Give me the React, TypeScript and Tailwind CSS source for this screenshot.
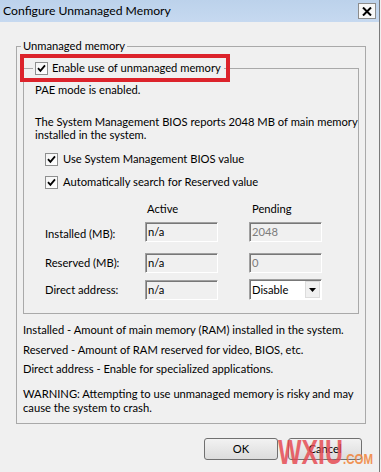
import React from 'react';

const Check = () => (
  <svg width="9" height="9" viewBox="0 0 9 9" aria-hidden>
    <path d="M1 4.2 L3.4 6.8 L8 1.4" fill="none" stroke="#000" strokeWidth="1.8" />
  </svg>
);

const CheckBox: React.FC = () => (
  <span className="inline-flex h-[13px] w-[13px] shrink-0 items-center justify-center border border-[#8e8f8f] bg-gradient-to-br from-[#f4f4f4] to-[#ffffff]">
    <Check />
  </span>
);

const Field: React.FC<{ value: string; muted?: boolean }> = ({ value, muted }) => (
  <div
    className={`flex h-[20px] w-[73px] items-center border border-t-[#a0a0a0] border-l-[#a0a0a0] border-r-[#ffffff] border-b-[#ffffff] bg-[#f0f0f0] pl-[2px] shadow-[inset_1px_1px_0_#777] ${
      muted ? 'text-[#7c7c7c]' : 'text-black'
    }`}
  >
    {value}
  </div>
);

const Select: React.FC<{ value: string }> = ({ value }) => (
  <div className="flex h-[21px] w-[73px] items-center border border-t-[#a0a0a0] border-l-[#a0a0a0] border-r-[#ffffff] border-b-[#ffffff] bg-white pl-[2px] shadow-[inset_1px_1px_0_#777]">
    <span className="flex-1">{value}</span>
    <span className="mr-[1px] flex h-[17px] w-[15px] items-center justify-center border border-[#dcdcdc] bg-[#f0f0f0]">
      <svg width="7" height="4" viewBox="0 0 7 4" aria-hidden>
        <path d="M0 0 H7 L3.5 4 Z" fill="#000" />
      </svg>
    </span>
  </div>
);

const Button: React.FC<{ label: string }> = ({ label }) => (
  <button className="flex h-[22px] w-[74px] items-center justify-center rounded-[3px] border border-[#707070] bg-gradient-to-b from-[#f2f2f2] to-[#dcdcdc] text-black">
    {label}
  </button>
);

// watermark stamped over the Cancel button
const Watermark = () => (
  <svg
    className="pointer-events-none absolute left-[278px] top-[-6px]"
    width="100"
    height="34"
    viewBox="0 0 100 34"
    aria-hidden
  >
    <text
      x="0"
      y="32"
      fontFamily="Liberation Sans, sans-serif"
      fontWeight="700"
      fontSize="35"
      textLength="65"
      lengthAdjust="spacingAndGlyphs"
      fill="#e6474f"
      opacity="0.82"
    >
      WXIU
    </text>
    <text
      x="65"
      y="32"
      fontFamily="Liberation Sans, sans-serif"
      fontWeight="700"
      fontSize="15"
      textLength="30"
      lengthAdjust="spacingAndGlyphs"
      fill="#f0843a"
      opacity="0.85"
    >
      .COM
    </text>
  </svg>
);

export default function App() {
  return (
    <div className="h-[472px] w-[381px] overflow-hidden whitespace-nowrap bg-[#f0f0f0] font-['Lato',sans-serif] text-[11.2px] leading-[14px] text-black">
      <div className="flex h-full w-[380px] flex-col border-r border-[#7a7a7a]">
        {/* title bar */}
        <div className="flex h-[22px] shrink-0 items-center justify-between bg-gradient-to-b from-[#bcd2eb] to-[#c6d9f0] pl-[3px] pr-[3px]">
          <span className="text-[12.2px]">Configure Unmanaged Memory</span>
          <span className="flex h-[16px] w-[18px] items-center justify-center border border-[#8c8c8c] bg-[#f7f7f7]">
            <svg width="10" height="9" viewBox="0 0 10 9" aria-hidden>
              <path d="M1 0.5 L9 8.5 M9 0.5 L1 8.5" stroke="#000" strokeWidth="2" />
            </svg>
          </span>
        </div>

        <div className="flex-1 pt-[17px]">
          <fieldset className="ml-[16px] w-[346px] border border-[#a9a9a9] px-[6px] pb-[8px]">
            <legend className="-ml-[2px] px-[2px]">Unmanaged memory</legend>

            <fieldset className="mt-[8px] border border-[#a9a9a9] pb-[13px]">
              <legend className="relative ml-[9px] pl-[2px] pr-[3px]">
                <span className="flex items-center gap-[4px]">
                  <CheckBox />
                  <span>Enable use of unmanaged memory</span>
                </span>
                <span className="absolute left-[-13px] top-[-7px] h-[28px] w-[210px] border-[4px] border-[#dc232b]" />
              </legend>

              <div className="pl-[11px]">
                <p className="mt-[8px]">PAE mode is enabled.</p>
                <p className="mt-[18px] leading-[13px]">
                  The System Management BIOS reports 2048 MB of main memory
                  <br />
                  installed in the system.
                </p>

                <div className="ml-[10px] mt-[11px] flex items-center gap-[5px]">
                  <CheckBox />
                  <span>Use System Management BIOS value</span>
                </div>
                <div className="ml-[10px] mt-[9px] flex items-center gap-[5px]">
                  <CheckBox />
                  <span>Automatically search for Reserved value</span>
                </div>

                <div className="ml-[10px] mt-[13px] flex">
                  <span className="w-[100px]" />
                  <span className="w-[73px] pl-[2px]">Active</span>
                  <span className="ml-[31px] w-[73px] pl-[3px]">Pending</span>
                </div>

                <div className="ml-[10px] mt-[6px] flex items-center">
                  <span className="mt-[4px] w-[100px]">Installed (MB):</span>
                  <Field value="n/a" />
                  <span className="ml-[31px]">
                    <Field value="2048" muted />
                  </span>
                </div>
                <div className="ml-[10px] mt-[11px] flex items-center">
                  <span className="w-[100px]">Reserved (MB):</span>
                  <Field value="n/a" />
                  <span className="ml-[31px]">
                    <Field value="0" muted />
                  </span>
                </div>
                <div className="ml-[10px] mt-[6px] flex items-center">
                  <span className="w-[100px]">Direct address:</span>
                  <Field value="n/a" />
                  <span className="ml-[31px]">
                    <Select value="Disable" />
                  </span>
                </div>
              </div>
            </fieldset>

            <p className="mt-[9px]">Installed - Amount of main memory (RAM) installed in the system.</p>
            <p className="mt-[6px]">Reserved - Amount of RAM reserved for video, BIOS, etc.</p>
            <p className="mt-[5px]">Direct address - Enable for specialized applications.</p>
            <p className="mt-[11px]">
              WARNING: Attempting to use unmanaged memory is risky and may
              <br />
              cause the system to crash.
            </p>
          </fieldset>

          <div className="relative mt-[14px] flex justify-end gap-[10px] pr-[17px]">
            <Button label="OK" />
            <Button label="Cancel" />
            <Watermark />
          </div>
        </div>
      </div>
    </div>
  );
}
